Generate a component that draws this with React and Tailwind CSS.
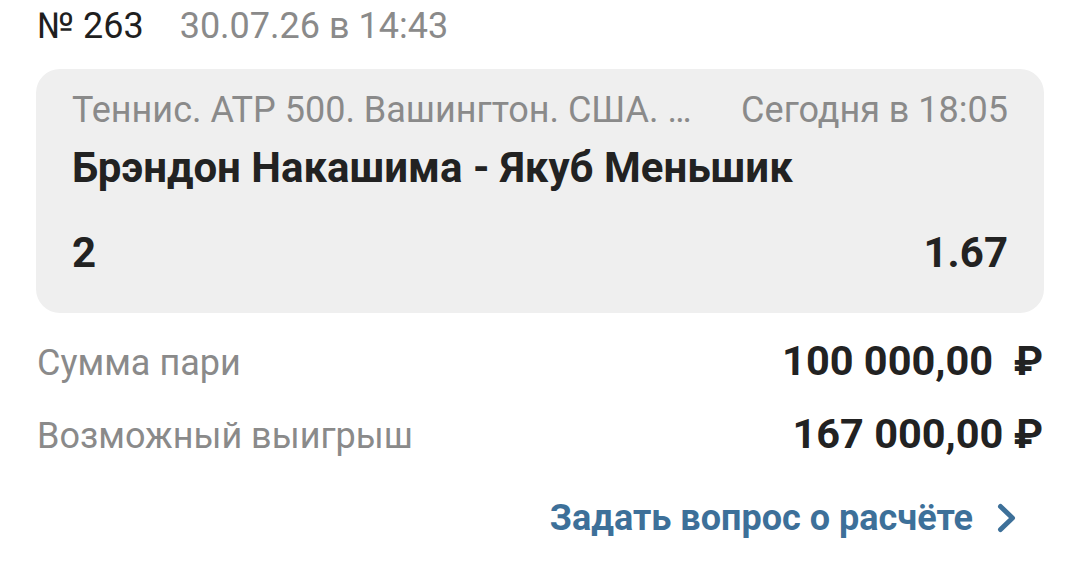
import React from 'react';

function Chevron() {
  return (
    <svg className="w-[20px] h-[30px]" viewBox="0 0 20 30" fill="none" stroke="currentColor" strokeWidth={5} strokeLinecap="round" strokeLinejoin="round">
      <path d="M3.5 3.5L15.5 15L3.5 26.5" />
    </svg>
  );
}

export default function App() {
  return (
    <div className="w-[1080px] h-[565px] bg-white overflow-hidden px-[37px] text-[#222222]" style={{ fontFamily: 'Roboto, "Noto Sans", sans-serif' }}>
      {/* Header */}
      <div className="flex items-baseline gap-[36px] pt-[4px] text-[36px] leading-[44px]">
        <span className="text-[#1f1f1f]">№ 263</span>
        <span className="text-[#8a8a8a]">30.07.26 в 14:43</span>
      </div>

      {/* Event card */}
      <div className="mt-[21px] -mx-px rounded-[24px] bg-[#efefef] px-[36px] pt-[19px] pb-[35px]">
        <div className="flex items-baseline justify-between text-[36px] leading-[44px] text-[#8a8a8a]">
          <span>Теннис. ATP 500. Вашингтон. США. …</span>
          <span>Сегодня в 18:05</span>
        </div>
        <div className="mt-[11px] text-[42px] leading-[50px] font-bold text-[#222222]">
          Брэндон Накашима - Якуб Меньшик
        </div>
        <div className="mt-[35px] flex items-baseline justify-between text-[42px] leading-[50px] font-bold text-[#222222]">
          <span>2</span>
          <span>1.67</span>
        </div>
      </div>

      {/* Amounts */}
      <div className="mt-[23px] flex items-baseline justify-between h-[50px] leading-[50px]">
        <span className="text-[36px] text-[#8a8a8a]">Сумма пари</span>
        <span className="text-[41.5px] font-bold">100 000,00 &nbsp;₽</span>
      </div>
      <div className="mt-[23px] flex items-baseline justify-between h-[50px] leading-[50px]">
        <span className="text-[36px] text-[#8a8a8a]">Возможный выигрыш</span>
        <span className="text-[41.5px] font-bold">167 000,00 ₽</span>
      </div>

      {/* Link */}
      <div className="mt-[37px] flex justify-end items-center gap-[24px] pr-[26px] text-[#3d7099]">
        <span className="text-[36px] leading-[44px] font-bold">Задать вопрос о расчёте</span>
        <Chevron />
      </div>
    </div>
  );
}
